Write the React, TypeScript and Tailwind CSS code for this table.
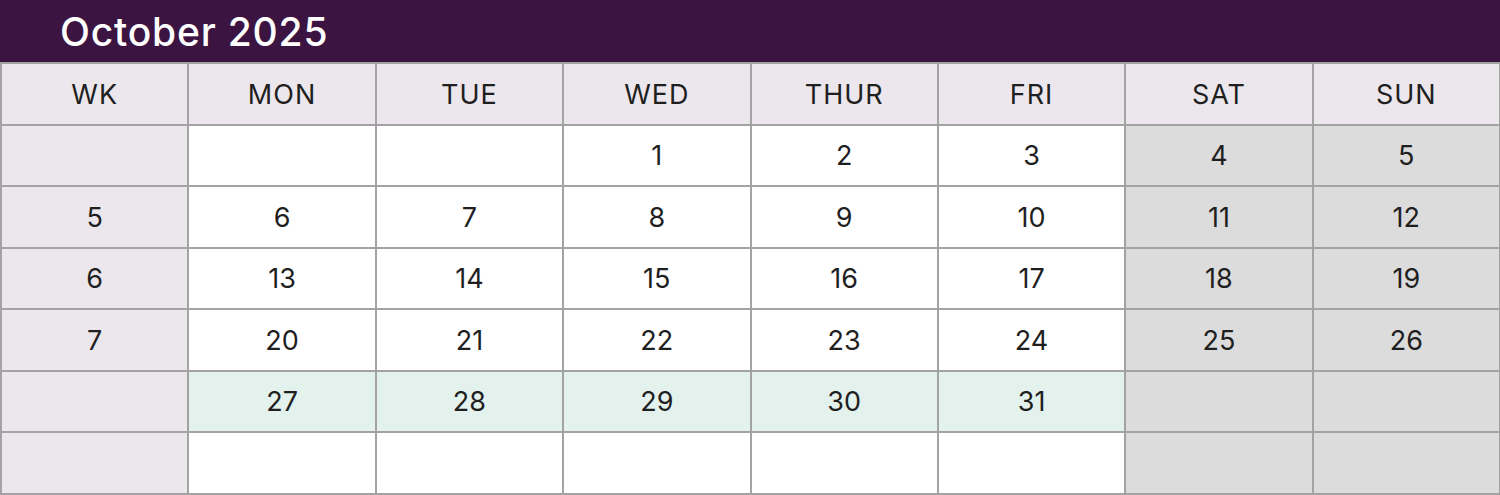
const DAYS = ['WK', 'MON', 'TUE', 'WED', 'THUR', 'FRI', 'SAT', 'SUN'];

// each row: [wk, mon..sun]
const ROWS: string[][] = [
  ['', '', '', '1', '2', '3', '4', '5'],
  ['5', '6', '7', '8', '9', '10', '11', '12'],
  ['6', '13', '14', '15', '16', '17', '18', '19'],
  ['7', '20', '21', '22', '23', '24', '25', '26'],
  ['', '27', '28', '29', '30', '31', '', ''],
  ['', '', '', '', '', '', '', ''],
];

function cellBg(row: number, col: number) {
  if (col === 0) return 'bg-[#ece7ec]';
  if (col >= 6) return 'bg-[#dcdcdc]';
  if (row === 4) return 'bg-[#e4f2ee]';
  return 'bg-white';
}

export default function App() {
  return (
    <div
      className="w-[1500px] h-[495px] bg-white"
      style={{ fontFamily: 'Inter, "Noto Sans", sans-serif' }}
    >
      <div className="h-[62px] bg-[#3b1442] flex items-center pl-[60px]">
        <h1 className="text-[39px] font-medium text-white leading-none tracking-[0.8px]">
          October 2025
        </h1>
      </div>
      <div className="grid grid-cols-8 grid-rows-7 gap-[2px] p-[2px] pr-[1px] bg-[#a3a3a3] h-[433px]">
        {DAYS.map((d) => (
          <div
            key={d}
            className="bg-[#ece7ec] flex items-center justify-center pt-[2px] text-[27px] tracking-[1px] text-[#1f1f1f]"
          >
            {d}
          </div>
        ))}
        {ROWS.map((row, r) =>
          row.map((v, c) => (
            <div
              key={`${r}-${c}`}
              className={`${cellBg(r, c)} flex items-center justify-center pt-[2px] text-[27px] text-[#1f1f1f]`}
            >
              {v}
            </div>
          ))
        )}
      </div>
    </div>
  );
}
